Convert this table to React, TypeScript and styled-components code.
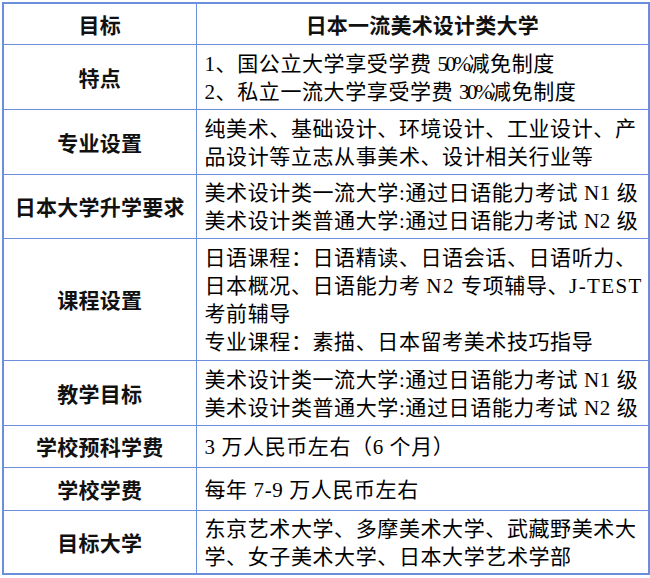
import React from "react";
import styled, { createGlobalStyle } from "styled-components";

const Global = createGlobalStyle`
  html, body { margin: 0; padding: 0; background: #ffffff; }
  body { width: 650px; height: 578px; overflow: hidden; }
`;

const BORDER = "#6b8fdc";

const Table = styled.table`
  margin: 2px 0 0 2px;
  width: 646px;
  table-layout: fixed;
  border-collapse: collapse;
  border: 2px solid ${BORDER};
`;

const Row = styled.tr<{ $h: number }>`
  height: ${(p) => p.$h}px;
`;

const LabelCell = styled.td`
  border: 1px solid ${BORDER};
  padding: 0;
  text-align: center;
  vertical-align: middle;
  font-family: "Noto Sans CJK SC", "Noto Sans", sans-serif;
  font-weight: 700;
  font-size: 21px;
  letter-spacing: 0.25px;
  line-height: 28px;
  color: #111111;
`;

const ValueCell = styled.td<{ $center?: boolean }>`
  border: 1px solid ${BORDER};
  padding: 2px 0 0 8px;
  text-align: ${(p) => (p.$center ? "center" : "left")};
  vertical-align: middle;
  font-family: "Liberation Serif", "Noto Sans CJK SC", serif;
  font-size: 21px;
  letter-spacing: 0.6px;
  line-height: 28px;
  color: #000000;
`;

const HeadValue = styled(ValueCell)`
  padding: 0;
  font-family: "Noto Sans CJK SC", "Noto Sans", sans-serif;
  font-weight: 700;
  letter-spacing: 0.2px;
  color: #111111;
`;

const Line = styled.span`
  display: block;
  white-space: nowrap;
`;

const Latin = styled.span<{ $ls: number }>`
  letter-spacing: ${(p) => p.$ls}px;
`;

type Seg = string | { t: string; ls: number };
type Item = { label: string; lines: Seg[][]; h: number };

const rows: Item[] = [
  {
    label: "特点",
    h: 65,
    lines: [
      ["1、国公立大学享受学费 ", { t: "50%", ls: -2.5 }, "减免制度"],
      ["2、私立一流大学享受学费 ", { t: "30%", ls: -2.5 }, "减免制度"],
    ],
  },
  {
    label: "专业设置",
    h: 65,
    lines: [["纯美术、基础设计、环境设计、工业设计、产"], ["品设计等立志从事美术、设计相关行业等"]],
  },
  {
    label: "日本大学升学要求",
    h: 64,
    lines: [["美术设计类一流大学:通过日语能力考试 N1 级"], ["美术设计类普通大学:通过日语能力考试 N2 级"]],
  },
  {
    label: "课程设置",
    h: 122,
    lines: [
      ["日语课程：日语精读、日语会话、日语听力、"],
      ["日本概况、日语能力考 ", { t: "N2", ls: 1.6 }, " 专项辅导、", { t: "J-TEST", ls: 1.4 }],
      ["考前辅导"],
      ["专业课程：素描、日本留考美术技巧指导"],
    ],
  },
  {
    label: "教学目标",
    h: 65,
    lines: [["美术设计类一流大学:通过日语能力考试 N1 级"], ["美术设计类普通大学:通过日语能力考试 N2 级"]],
  },
  { label: "学校预科学费", h: 42, lines: [["3 万人民币左右（6 个月）"]] },
  { label: "学校学费", h: 43, lines: [["每年 7-9 万人民币左右"]] },
  {
    label: "目标大学",
    h: 64,
    lines: [["东京艺术大学、多摩美术大学、武藏野美术大"], ["学、女子美术大学、日本大学艺术学部"]],
  },
];

export default function App() {
  return (
    <>
      <Global />
      <Table>
        <colgroup>
          <col style={{ width: 193 }} />
          <col style={{ width: 453 }} />
        </colgroup>
        <tbody>
          <Row $h={41}>
            <LabelCell>目标</LabelCell>
            <HeadValue $center>日本一流美术设计类大学</HeadValue>
          </Row>
          {rows.map((r) => (
            <Row key={r.label + r.h} $h={r.h}>
              <LabelCell>{r.label}</LabelCell>
              <ValueCell>
                {r.lines.map((segs, i) => (
                  <Line key={i}>
                    {segs.map((s, j) =>
                      typeof s === "string" ? (
                        <React.Fragment key={j}>{s}</React.Fragment>
                      ) : (
                        <Latin key={j} $ls={s.ls}>
                          {s.t}
                        </Latin>
                      )
                    )}
                  </Line>
                ))}
              </ValueCell>
            </Row>
          ))}
        </tbody>
      </Table>
    </>
  );
}
